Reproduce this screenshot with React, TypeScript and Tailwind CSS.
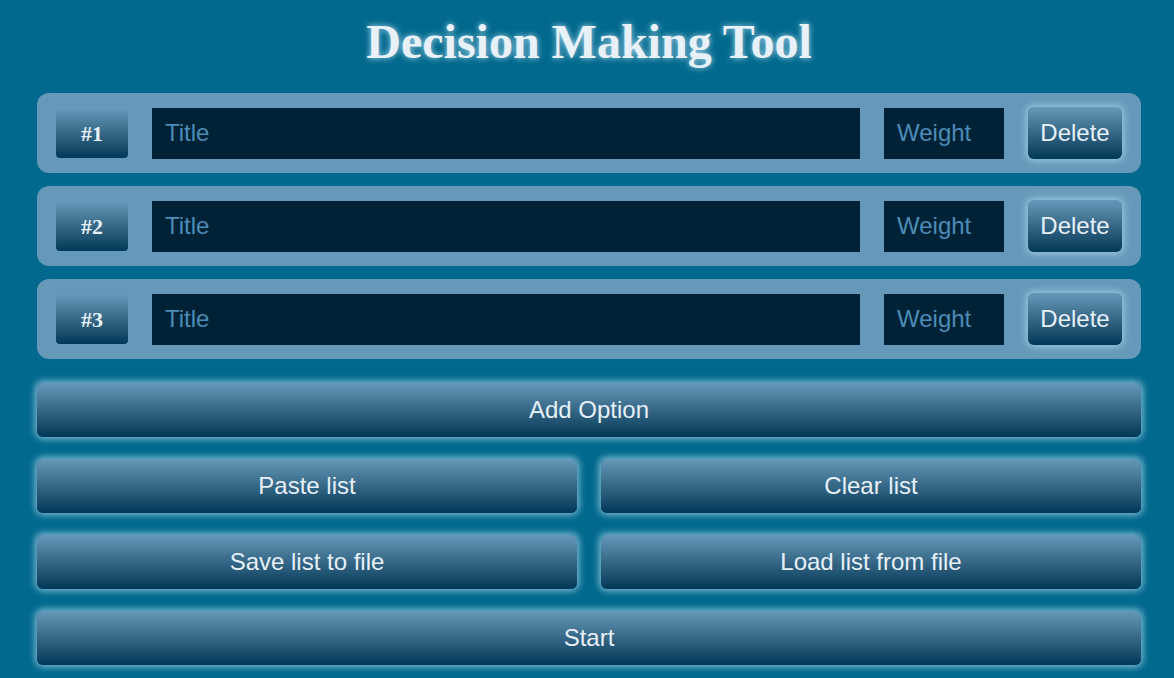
import React from "react"

const btn =
  "rounded-[6px] bg-gradient-to-b from-[#6699b9] to-[#003857] text-[#e6f0f7] text-[24px] shadow-[0_0_7px_2px_rgba(170,212,235,0.75)]"

function OptionRow({ n }: { n: number }) {
  return (
    <div className="flex h-[80px] items-center gap-[24px] rounded-[12px] bg-[#6699b9] px-[19px]">
      <div className="flex h-[49px] w-[72px] items-center justify-center rounded-[4px] bg-gradient-to-b from-[#6699b9] to-[#003857] font-['Liberation_Serif',serif] text-[22px] font-bold text-[#e6f0f7]">
        #{n}
      </div>
      <input
        placeholder="Title"
        className="h-[51px] flex-1 bg-[#002236] pl-[13px] text-[24px] text-[#e6f0f7] outline-none placeholder:text-[#4d8cb6]"
      />
      <input
        placeholder="Weight"
        className="h-[51px] w-[120px] bg-[#002236] pl-[13px] text-[24px] text-[#e6f0f7] outline-none placeholder:text-[#4d8cb6]"
      />
      <button className={`h-[52px] w-[94px] ${btn}`}>Delete</button>
    </div>
  )
}

export default function App() {
  return (
    <div className="min-h-screen bg-[#00698d] pl-[37px] pr-[33px] pb-[20px] pt-[14px] font-['Liberation_Sans',Arial,sans-serif]">
      <h1 className="text-center font-['Liberation_Serif',serif] text-[48px] font-bold leading-[56px] text-[#e8f1f8] [text-shadow:0_0_6px_rgba(200,232,250,0.9)]">
        Decision Making Tool
      </h1>
      <div className="mt-[23px] flex flex-col gap-[13px]">
        {[1, 2, 3].map((n) => (
          <OptionRow key={n} n={n} />
        ))}
      </div>
      <div className="mt-[24px] flex flex-col gap-[22px]">
        <button className={`h-[54px] w-full ${btn}`}>Add Option</button>
        <div className="grid grid-cols-2 gap-[24px]">
          <button className={`h-[54px] ${btn}`}>Paste list</button>
          <button className={`h-[54px] ${btn}`}>Clear list</button>
        </div>
        <div className="grid grid-cols-2 gap-[24px]">
          <button className={`h-[54px] ${btn}`}>Save list to file</button>
          <button className={`h-[54px] ${btn}`}>Load list from file</button>
        </div>
        <button className={`h-[54px] w-full ${btn}`}>Start</button>
      </div>
    </div>
  )
}
